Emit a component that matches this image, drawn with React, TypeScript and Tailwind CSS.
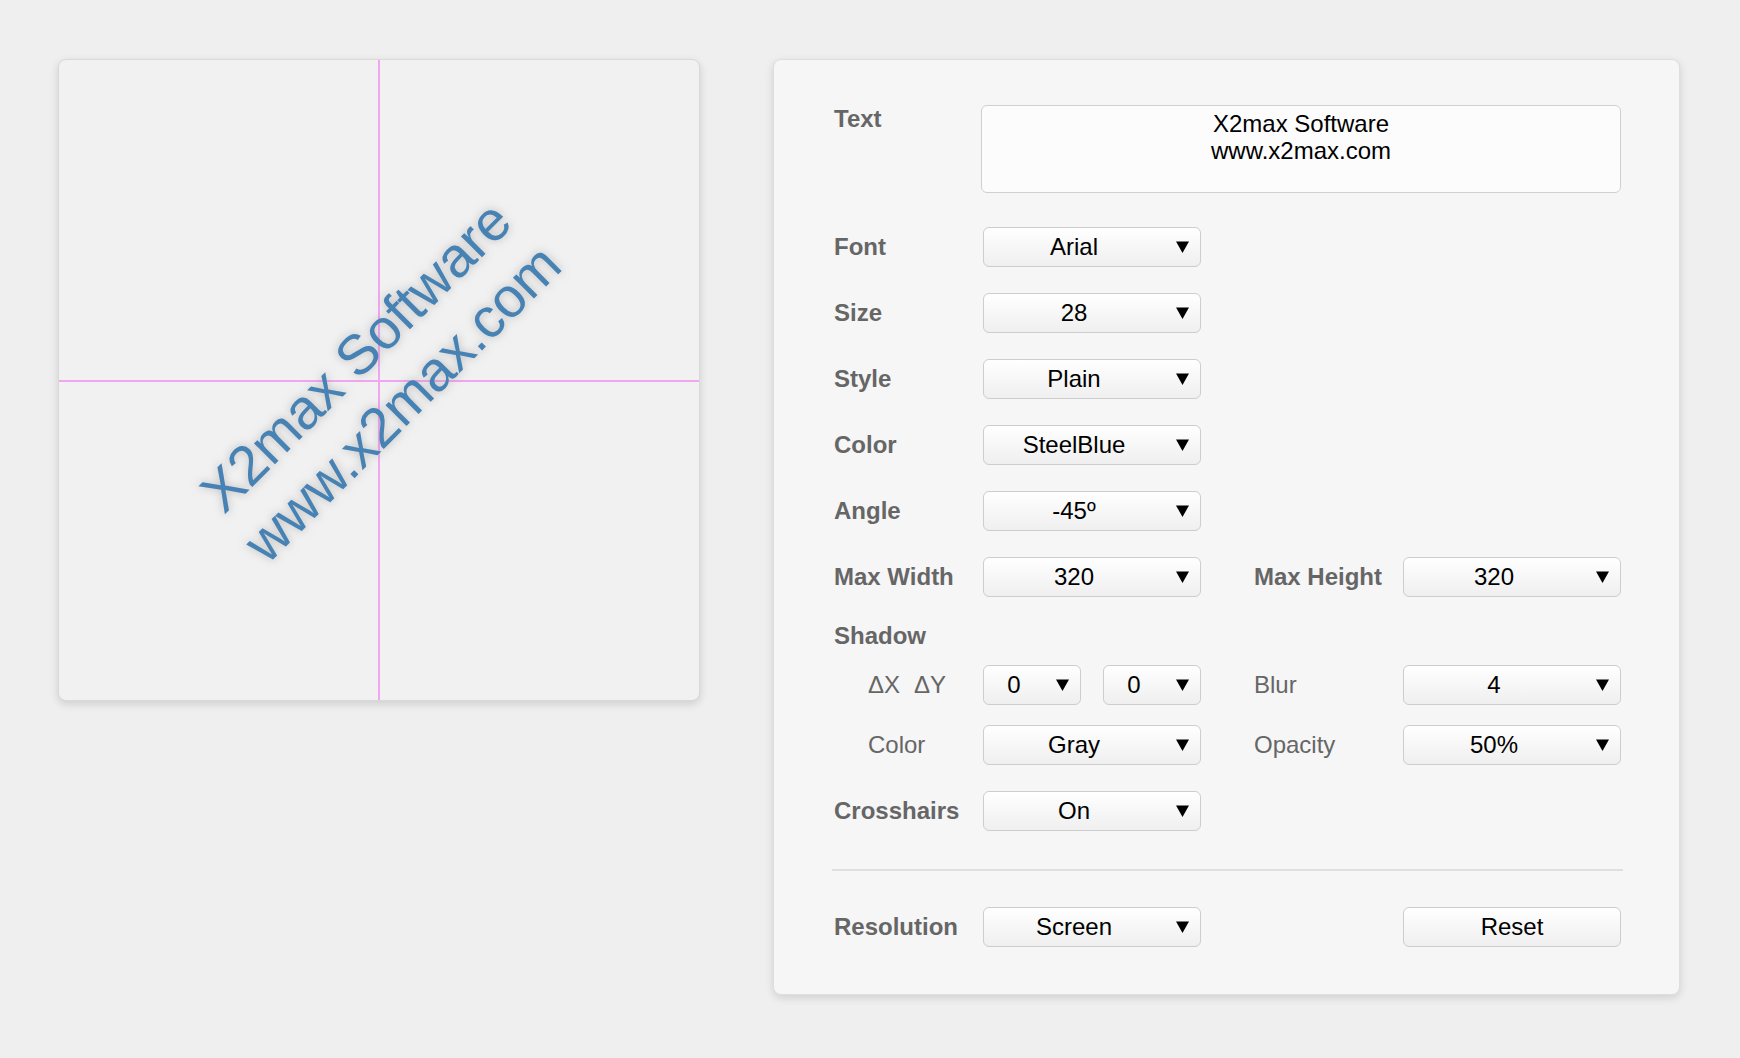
import React from "react";

type SelectProps = {
  value: string;
  width?: string;
};

// Popup-style select: value centred in the space left of the arrow
function Select({ value, width = "w-[218px]" }: SelectProps) {
  return (
    <div
      className={`relative flex h-[40px] ${width} items-center justify-center rounded-[6px] border border-[#cdcdcd] bg-gradient-to-b from-white to-[#efefef] pr-[36px] text-[24px] text-black`}
    >
      <span>{value}</span>
      <svg
        className="absolute right-[11px] top-1/2 -translate-y-1/2"
        width="13"
        height="12"
        viewBox="0 0 13 12"
      >
        <path d="M0 0.5H13L6.5 12Z" fill="#000" />
      </svg>
    </div>
  );
}

function Label({ children }: { children: React.ReactNode }) {
  return (
    <div className="w-[149px] shrink-0 text-[24px] font-bold leading-[28px] text-[#666]">
      {children}
    </div>
  );
}

function SubLabel({ children }: { children: React.ReactNode }) {
  return (
    <div className="w-[149px] shrink-0 pl-[34px] text-[24px] leading-[28px] text-[#666]">
      {children}
    </div>
  );
}

function Preview() {
  return (
    <div className="relative flex h-[642px] w-[642px] shrink-0 items-center justify-center overflow-hidden rounded-[8px] border border-[#d9d9d9] bg-[#f1f1f1] shadow-[0_3px_9px_rgba(0,0,0,0.14)]">
      {/* crosshairs */}
      <div className="absolute left-[319px] top-0 h-full w-[2px] bg-[#f2a6f0]" />
      <div className="absolute left-0 top-[320px] h-[2px] w-full bg-[#f2a6f0]" />
      <div className="relative -rotate-45 whitespace-nowrap text-center text-[56px] leading-[66px] text-[#4682b4] [text-shadow:0_0_8px_rgba(128,128,128,0.5)]">
        <div>X2max Software</div>
        <div>www.x2max.com</div>
      </div>
    </div>
  );
}

function Settings() {
  return (
    <div className="flex w-[907px] shrink-0 flex-col rounded-[8px] border border-[#dedede] bg-[#f6f6f6] pb-[47px] pl-[60px] pr-[58px] pt-[45px] shadow-[0_3px_9px_rgba(0,0,0,0.13)]">
      <div className="flex">
        <div className="w-[147px] shrink-0 text-[24px] font-bold leading-[28px] text-[#666]">Text</div>
        <div className="h-[88px] w-[640px] rounded-[6px] border border-[#d0d0d0] bg-[#fcfcfc] pt-[4px] text-center text-[24px] leading-[27px] text-black">
          <div>X2max Software</div>
          <div>www.x2max.com</div>
        </div>
      </div>

      <div className="mt-[34px] flex items-center">
        <Label>Font</Label>
        <Select value="Arial" />
      </div>
      <div className="mt-[26px] flex items-center">
        <Label>Size</Label>
        <Select value="28" />
      </div>
      <div className="mt-[26px] flex items-center">
        <Label>Style</Label>
        <Select value="Plain" />
      </div>
      <div className="mt-[26px] flex items-center">
        <Label>Color</Label>
        <Select value="SteelBlue" />
      </div>
      <div className="mt-[26px] flex items-center">
        <Label>Angle</Label>
        <Select value="-45º" />
      </div>
      <div className="mt-[26px] flex items-center">
        <Label>Max Width</Label>
        <Select value="320" />
        <div className="ml-[53px]">
          <Label>Max Height</Label>
        </div>
        <Select value="320" />
      </div>

      <div className="mt-[25px]">
        <Label>Shadow</Label>
      </div>
      <div className="mt-[15px] flex items-center">
        <SubLabel>
          <span>ΔX</span>
          <span className="ml-[14px]">ΔY</span>
        </SubLabel>
        <div className="flex gap-[22px]">
          <Select value="0" width="w-[98px]" />
          <Select value="0" width="w-[98px]" />
        </div>
        <div className="ml-[53px] w-[149px] shrink-0 text-[24px] leading-[28px] text-[#666]">Blur</div>
        <Select value="4" />
      </div>
      <div className="mt-[20px] flex items-center">
        <SubLabel>Color</SubLabel>
        <Select value="Gray" />
        <div className="ml-[53px] w-[149px] shrink-0 text-[24px] leading-[28px] text-[#666]">Opacity</div>
        <Select value="50%" />
      </div>
      <div className="mt-[26px] flex items-center">
        <Label>Crosshairs</Label>
        <Select value="On" />
      </div>

      <div className="-mx-[2px] mt-[38px] h-[2px] bg-[#dfdfdf]" />

      <div className="mt-[36px] flex items-center">
        <Label>Resolution</Label>
        <Select value="Screen" />
        <button className="ml-auto flex h-[40px] w-[218px] items-center justify-center rounded-[6px] border border-[#cdcdcd] bg-gradient-to-b from-white to-[#efefef] text-[24px] text-black">
          Reset
        </button>
      </div>
    </div>
  );
}

export default function App() {
  return (
    <main className="min-h-screen bg-[#efefef] pl-[58px] pt-[59px] font-['Liberation_Sans',Arial,sans-serif]">
      <div className="flex items-start gap-[73px]">
        <Preview />
        <Settings />
      </div>
    </main>
  );
}
